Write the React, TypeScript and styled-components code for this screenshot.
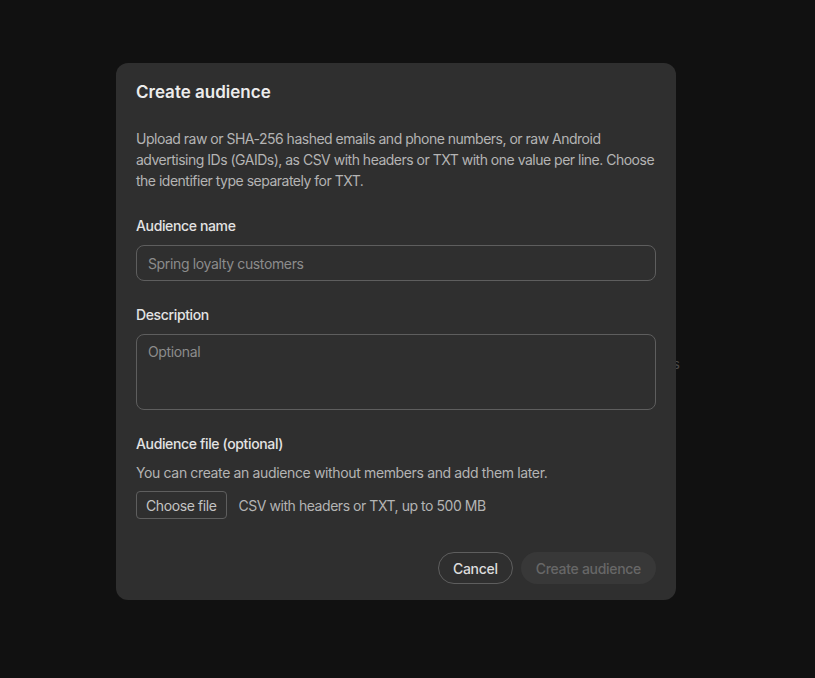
import React from "react";
import styled, { createGlobalStyle } from "styled-components";

const GlobalStyle = createGlobalStyle`
  html, body {
    margin: 0;
    padding: 0;
    background: #111111;
    font-family: Inter, "Noto Sans", sans-serif;
  }
  * { box-sizing: border-box; }
`;

const Backdrop = styled.div`
  position: relative;
  width: 100%;
  height: 678px;
  background: #111111;
  overflow: hidden;
`;

const BehindText = styled.span`
  position: absolute;
  right: 135px;
  top: 356px;
  font-size: 13px;
  color: #4a4a4a;
`;

const Dialog = styled.div`
  position: absolute;
  left: 116px;
  top: 63px;
  width: 560px;
  height: 537px;
  background: #2f2f2f;
  border-radius: 12px;
  padding: 19px 20px 16px;
  display: flex;
  flex-direction: column;
  letter-spacing: -0.36px;
`;

const Title = styled.h2`
  margin: 0;
  font-size: 17px;
  font-weight: 600;
  line-height: 20px;
  letter-spacing: 0;
  color: #ececec;
`;

const Intro = styled.p`
  margin: 26px 0 0;
  font-size: 14px;
  line-height: 21px;
  letter-spacing: -0.5px;
  color: #b4b4b4;
`;

const Field = styled.div<{ $top: number }>`
  display: flex;
  flex-direction: column;
  margin-top: ${({ $top }) => $top}px;
`;

const Label = styled.label`
  font-size: 14px;
  font-weight: 500;
  line-height: 18px;
  color: #e3e3e3;
  margin-bottom: 10px;
`;

const controlStyles = `
  width: 100%;
  background: transparent;
  border: 1px solid #5e5e5e;
  border-radius: 8px;
  color: #ececec;
  font-family: Inter, "Noto Sans", sans-serif;
  font-size: 14px;
  letter-spacing: -0.36px;
  outline: none;
  padding: 0 11px;
  &::placeholder { color: #8c8c8c; }
`;

const Input = styled.input`
  ${controlStyles}
  height: 36px;
`;

const TextArea = styled.textarea`
  ${controlStyles}
  height: 76px;
  padding-top: 8px;
  resize: none;
  line-height: 18px;
`;

const Helper = styled.p`
  margin: 1px 0 9px;
  font-size: 14px;
  line-height: 18px;
  color: #b4b4b4;
`;

const FileRow = styled.div`
  display: flex;
  align-items: center;
  gap: 12px;
`;

const FileButton = styled.button`
  height: 28px;
  padding: 0 9px;
  background: transparent;
  border: 1px solid #5e5e5e;
  border-radius: 4px;
  color: #c4c4c4;
  font-family: Inter, "Noto Sans", sans-serif;
  font-size: 14px;
  letter-spacing: -0.4px;
`;

const FileHint = styled.span`
  font-size: 14px;
  letter-spacing: -0.45px;
  color: #b4b4b4;
`;

const Footer = styled.div`
  margin-top: auto;
  display: flex;
  justify-content: flex-end;
  gap: 8px;
`;

const PillButton = styled.button<{ $primary?: boolean }>`
  height: 32px;
  padding: 0 14px;
  border-radius: 999px;
  font-family: Inter, "Noto Sans", sans-serif;
  font-size: 14px;
  font-weight: 500;
  letter-spacing: -0.3px;
  border: 1px solid ${({ $primary }) => ($primary ? "transparent" : "#5e5e5e")};
  background: ${({ $primary }) => ($primary ? "#383838" : "transparent")};
  color: ${({ $primary }) => ($primary ? "#676767" : "#dcdcdc")};
`;

export default function App() {
  return (
    <>
      <GlobalStyle />
      <Backdrop>
        <BehindText>Audiences</BehindText>
        <Dialog>
          <Title>Create audience</Title>
          <Intro>
            Upload raw or SHA-256 hashed emails and phone numbers, or raw Android advertising IDs
            (GAIDs), as CSV with headers or TXT with one value per line. Choose the identifier type
            separately for TXT.
          </Intro>
          <Field $top={26}>
            <Label>Audience name</Label>
            <Input placeholder="Spring loyalty customers" />
          </Field>
          <Field $top={25}>
            <Label>Description</Label>
            <TextArea placeholder="Optional" />
          </Field>
          <Field $top={25}>
            <Label>Audience file (optional)</Label>
            <Helper>You can create an audience without members and add them later.</Helper>
            <FileRow>
              <FileButton>Choose file</FileButton>
              <FileHint>CSV with headers or TXT, up to 500 MB</FileHint>
            </FileRow>
          </Field>
          <Footer>
            <PillButton>Cancel</PillButton>
            <PillButton $primary disabled>
              Create audience
            </PillButton>
          </Footer>
        </Dialog>
      </Backdrop>
    </>
  );
}
